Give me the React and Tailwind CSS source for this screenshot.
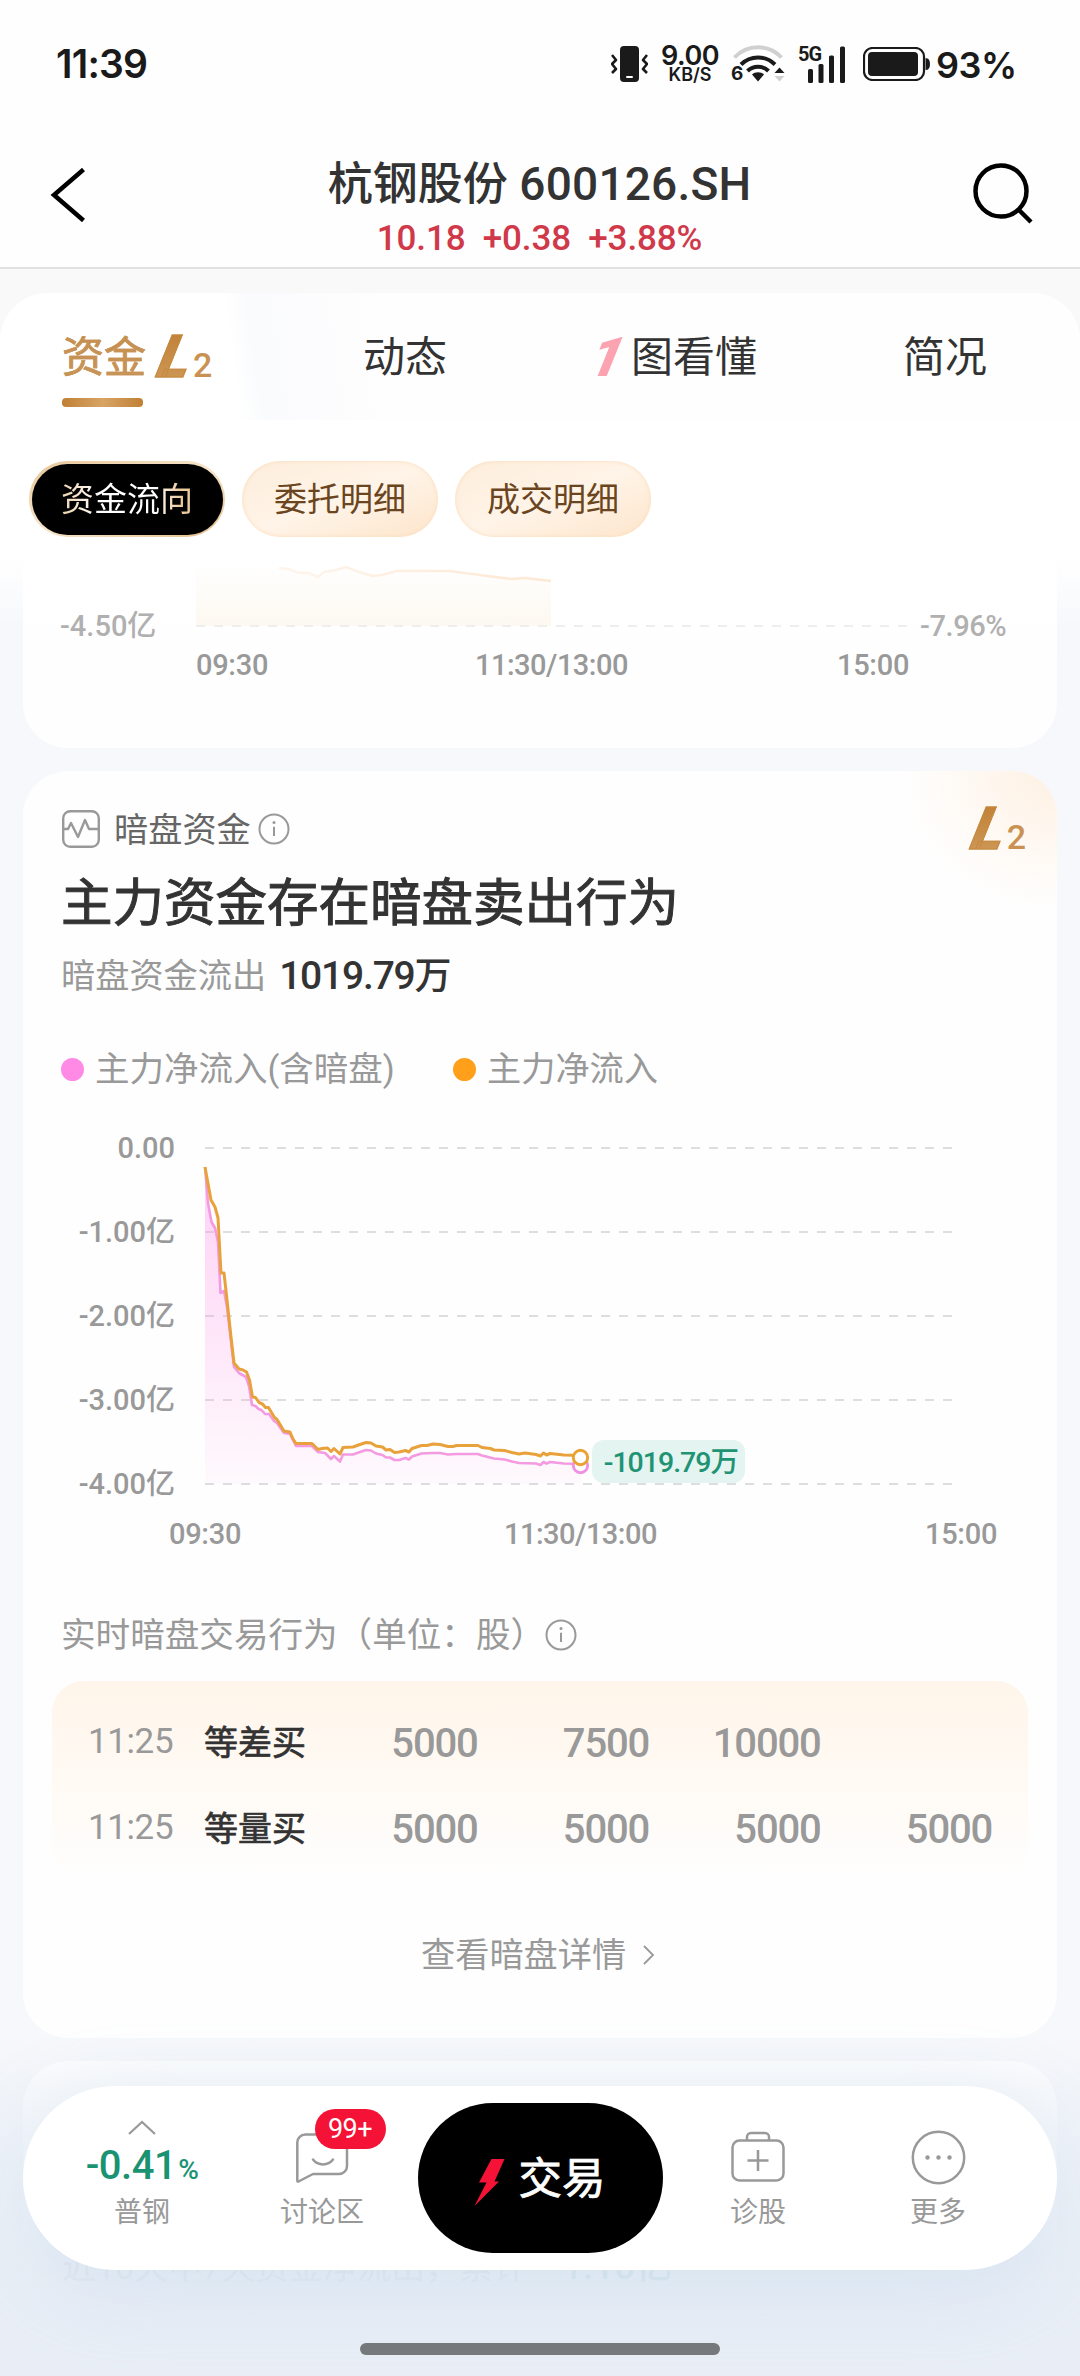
import React from "react";

const ORANGE = [
  [0, 19], [6, 52], [10, 59], [13, 70], [16, 125], [19, 125], [22, 152], [26, 189], [29, 215], [34, 221],
  [38, 222], [41.5, 224], [44.5, 232], [47.5, 249], [50.5, 249.5], [54, 254.5], [57.5, 256], [60.5, 259.5],
  [63.5, 259.5], [69.5, 269.5], [72, 271.5], [79, 283], [85, 284], [88, 291], [91, 295.5], [107, 295.5],
  [113, 301.5], [117, 300.5], [122.5, 300], [126, 303.5], [129, 300.5], [135, 306], [138, 299.5], [148, 299],
  [153.5, 297], [161, 294.5], [166, 295], [171, 298], [177.5, 299], [181, 302], [185, 301.5], [189.5, 304.5],
  [194, 304], [200.5, 302.5], [204, 304], [207, 300.5], [216.5, 297.5], [222, 297.5], [228, 296], [235, 296.5],
  [243, 298.5], [248, 298.5], [251.5, 297.5], [273, 297.5], [277, 299.5], [285.5, 300.5], [289, 302],
  [299.5, 302.5], [307, 304.5], [314, 306], [320, 305], [331, 306.5], [335.5, 308], [338.5, 305], [341.5, 307],
  [345, 305.5], [359, 307], [375.5, 307.5],
];

const PINK = [
  [0, 19], [3, 55], [6.5, 74], [10, 80], [13, 94], [15.5, 145], [19, 143], [22, 159], [26, 193], [29, 219],
  [34, 225], [41, 229], [44, 238], [47, 257], [50.5, 258], [53.5, 261], [56.5, 262], [60, 266], [64, 266],
  [69, 273], [72, 275], [79, 285], [85, 286], [91, 298], [107, 298], [113, 304], [120, 305], [126, 311],
  [129, 308], [135, 313.5], [138, 306.5], [148, 306.5], [153.5, 304.5], [161, 302], [166, 302.5], [171, 305.5],
  [177.5, 307], [181, 309.5], [185, 309.5], [189.5, 312], [194, 312], [200.5, 310], [204, 311.5], [207, 308.5],
  [216.5, 305.5], [228, 305], [235, 305], [243, 306.5], [251.5, 306], [273, 306], [277, 307.5], [289, 310.5],
  [299.5, 311.5], [307, 313.5], [314, 315], [331, 315.5], [335.5, 317], [338.5, 314], [341.5, 315.5],
  [345, 314], [359, 315.5], [375.5, 316],
];

const toPoints = (pts) => pts.map((p) => p.join(",")).join(" ");

function InfoIcon() {
  return (
    <svg className="h-8 w-8" viewBox="0 0 32 32" fill="none" stroke="#999" strokeWidth="2">
      <circle cx="16" cy="16" r="14.5" />
      <path d="M16 13.8V23" />
      <circle cx="16" cy="9.6" r="1.5" fill="#999" stroke="none" />
    </svg>
  );
}

function LevelTwo() {
  return (
    <span className="flex items-baseline">
      <span className="w-[34px] -skew-x-[22deg] bg-gradient-to-b from-[#bf7f33] to-[#cf9a58] bg-clip-text text-[59px] leading-[60px] font-black text-transparent [-webkit-text-stroke:1px_#c48a42]">
        L
      </span>
      <span className="-ml-px text-[34px] leading-[40px] font-medium text-[#c99253]">2</span>
    </span>
  );
}

function StatusBar() {
  return (
    <div className="flex h-32 items-center pr-[66px] pl-14 text-[#1a1a1a] [font-family:Inter,sans-serif]">
      <span className="text-[39px] leading-10 font-semibold tracking-[-0.8px]">11:39</span>
      <div className="ml-auto flex items-center">
        <svg className="h-9 w-[37px]" viewBox="0 0 37 36" fill="none" stroke="#1a1a1a" strokeWidth="2.6">
          <rect x="9" y="0" width="19" height="36" rx="4" fill="#1a1a1a" stroke="none" />
          <rect x="15" y="30" width="7" height="2" rx="1" fill="#fff" stroke="none" />
          <path d="M1 9l4 5-4 4 4 5-4 4M36 9l-4 5 4 4-4 5 4 4" strokeLinejoin="round" />
        </svg>
        <div className="ml-3 flex w-[60px] flex-col items-center">
          <span className="text-[27px] leading-[21px] font-semibold tracking-[-0.5px]">9.00</span>
          <span className="text-[18px] leading-[17px] font-semibold">KB/S</span>
        </div>
        <div className="ml-[11px] flex items-end">
          <span className="w-[11px] text-[19px] leading-[16px] font-bold">6</span>
          <svg className="h-9 w-[43px] overflow-visible" viewBox="11 0 43 36" fill="none">
            <g strokeWidth="4">
              <path d="M3.500 11.500a32 32 0 0 1 47 0" stroke="#d0d0d0" />
              <path d="M10 18.500a24 24 0 0 1 34 0" stroke="#1a1a1a" />
              <path d="M16.500 25a15 15 0 0 1 21 0" stroke="#1a1a1a" />
            </g>
            <path d="M27 35.500l-6-7c3-3 9-3 12 0z" fill="#1a1a1a" />
            <path d="M43.500 27l5-5.500 5 5.500z" fill="#1a1a1a" />
            <path d="M43.500 30l5 5.500 5-5.500z" fill="#d0d0d0" />
          </svg>
        </div>
        <div className="ml-[13px] flex h-[37px] w-12 items-start">
          <span className="w-[9px] text-[20px] leading-4 font-bold tracking-[-1px] [font-family:Roboto,sans-serif]">5G</span>
          <svg className="h-[37px] w-[39px]" viewBox="9 0 39 37" fill="#1a1a1a">
            <rect x="10" y="23" width="5" height="14" rx="1.500" />
            <rect x="20.500" y="18" width="5" height="19" rx="1.500" />
            <rect x="31" y="9.500" width="5" height="27.500" rx="1.500" />
            <rect x="42" y="0.500" width="5" height="36.500" rx="1.500" />
          </svg>
        </div>
        <svg className="ml-[17px] h-[34px] w-[68px]" viewBox="0 0 68 34">
          <rect x="1" y="1" width="60" height="32" rx="8.500" fill="none" stroke="#1a1a1a" strokeWidth="2.200" />
          <rect x="5" y="5" width="50" height="24" rx="4" fill="#1a1a1a" />
          <path d="M62.500 11c3 0 4.500 2 4.500 6s-1.500 6-4.500 6z" fill="#1a1a1a" />
        </svg>
        <span className="ml-[5px] w-[78px] pt-0.5 text-[36px] leading-10 font-semibold tracking-[-0.500px] whitespace-nowrap">93%</span>
      </div>
    </div>
  );
}

function Header() {
  return (
    <div className="flex h-[141px] justify-between border-b-2 border-[#e0e0e0] px-[50px]">
      <svg className="mt-10 h-[54px] w-9" viewBox="0 0 36 54" fill="none" stroke="#000" strokeWidth="4.500">
        <path d="M33.500 1.500L4 27l29.500 25.500" />
      </svg>
      <div className="ml-[27px] flex flex-col items-center pt-[31px]">
        <span className="text-[45px] leading-[50px] font-medium whitespace-pre text-[#333]">
          杭钢股份<span className="text-[46px] tracking-[0.200px]"> 600126.SH</span>
        </span>
        <span className="mt-[9px] text-[35px] leading-10 font-medium tracking-[-0.100px] whitespace-pre text-[#d0394a]">
          10.18  +0.38  +3.88%
        </span>
      </div>
      <svg className="mt-[34px] -mr-1 h-[64px] w-[68px]" viewBox="0 0 68 64" fill="none" stroke="#000" strokeWidth="4.500">
        <circle cx="35" cy="29" r="25.500" />
        <path d="M52 47l13 13" />
      </svg>
    </div>
  );
}

function Tabs() {
  return (
    <div className="flex h-[127px] items-start rounded-t-[48px] bg-[linear-gradient(82deg,#fff_0,#fff_238px,#fafbfd_262px,#fcfcfe_310px,#fefefe_400px,#fefefe_100%)] pt-[35px] pl-[62px] text-[42px] leading-[60px] text-[#333]">
      <div className="w-[301px]">
        <div className="flex h-[60px] items-center">
          <span className="bg-gradient-to-b from-[#c58e4f] to-[#c99759] bg-clip-text text-transparent [-webkit-text-stroke:0.600px_#c79254]">资金</span>
          <div className="-mt-0.5 ml-[14px]">
            <LevelTwo />
          </div>
        </div>
        <div className="mt-[10px] h-[9px] w-[81px] rounded bg-gradient-to-r from-[#c08034] via-[#d8a464] to-[#c08034]" />
      </div>
      <span className="w-[229px]">动态</span>
      <span className="-mt-px w-[39px] -skew-x-[22deg] text-[55px] font-black text-[#fca3b2]">1</span>
      <span className="w-[272px]">图看懂</span>
      <span>简况</span>
    </div>
  );
}

function Pill({ children, active }) {
  if (active) {
    return (
      <div className="rounded-full bg-gradient-to-br from-[#e8c79a] via-[#f6e5cb] to-[#e5bf90] p-[2.5px]">
        <div className="flex h-[71px] w-[191px] items-center justify-center rounded-full bg-black pt-0.5">
          <span className="bg-[linear-gradient(90deg,#ecd2ad_0%,#fff_30%,#fff_70%,#eccb9f_90%)] bg-clip-text text-transparent">
            {children}
          </span>
        </div>
      </div>
    );
  }
  return (
    <div className="flex h-[76px] w-[196px] items-center justify-center rounded-full bg-gradient-to-br from-[#fdeddb] via-[#fff4e8] to-[#fde5cb] pt-0.5 text-[#6b4520] shadow-[inset_0_0_4px_#fbdcbc]">
      {children}
    </div>
  );
}

function FlowChartTail() {
  return (
    <div className="mx-[23px] h-[211px] rounded-b-[45px] bg-gradient-to-b from-white to-[#fefefe] text-[29px] leading-[30px] font-medium text-[#999]">
      <div className="flex pt-[23px] pl-[37px]">
        <span className="mt-[51px] w-[136px] text-[#b0b0b0]">-4.50亿</span>
        <svg className="h-[68px] w-[713px]" viewBox="0 0 713 68" fill="none">
          <defs>
            <linearGradient id="tail" x1="0" y1="0" x2="0" y2="1">
              <stop offset="0" stopColor="#fefefd" />
              <stop offset="1" stopColor="#fdf9f1" />
            </linearGradient>
            <linearGradient id="tailLine" x1="83" y1="0" x2="355" y2="0" gradientUnits="userSpaceOnUse">
              <stop offset="0" stopColor="#fef5ec" />
              <stop offset="1" stopColor="#fde8d4" />
            </linearGradient>
          </defs>
          <path d="M0 8H83L107 13l19 3 6-4 22-4 25 7 24-4h52l31 4 31 3 38 2V66H0z" fill="url(#tail)" />
          <path d="M83 8l10 1 10 4 10 0 9 4 6-5 12-2 10-3 13 5 14 4 9-1 15-4h52l31 4 31 4 14-1 26 3" stroke="url(#tailLine)" strokeWidth="2.500" />
          <path d="M0 66H713" stroke="#eee" strokeWidth="2" strokeDasharray="9 9" />
        </svg>
        <span className="mt-[51px] ml-[11px] tracking-[-0.400px] text-[#b0b0b0]">-7.96%</span>
      </div>
      <div className="mt-[9px] flex pl-[173px] tracking-[-0.300px]">
        <span className="w-[279px]">09:30</span>
        <span className="w-[362px] tracking-[-0.500px]">11:30/13:00</span>
        <span>15:00</span>
      </div>
    </div>
  );
}

function DarkChart() {
  const grid = [0, 84, 168, 252, 336];
  return (
    <div className="text-[29px] leading-[30px] font-medium text-[#999]">
      <div className="mt-[46px] flex">
        <div className="flex h-[366px] w-[114px] flex-col items-end justify-between">
          {["0.00", "-1.00亿", "-2.00亿", "-3.00亿", "-4.00亿"].map((t) => (
            <span key={t} className="whitespace-nowrap">{t}</span>
          ))}
        </div>
        <div className="relative mt-[15px] ml-[30px]">
          <svg className="h-[337px] w-[748px] overflow-visible" viewBox="0 0 748 337" fill="none">
            <defs>
              <linearGradient id="pinkFill" x1="0" y1="0" x2="0" y2="1">
                <stop offset="0" stopColor="#ff8ce6" stopOpacity="0.4" />
                <stop offset="1" stopColor="#ff8ce6" stopOpacity="0.04" />
              </linearGradient>
            </defs>
            {grid.map((y) => (
              <path key={y} d={`M0 ${y}H748`} stroke="#dedede" strokeWidth="2" strokeDasharray="9 9" />
            ))}
            <polygon points={`0,336 ${toPoints(PINK)} 376,336`} fill="url(#pinkFill)" />
            <polyline points={toPoints(PINK)} stroke="#f39ae0" strokeWidth="2.600" strokeLinejoin="round" />
            <polyline points={toPoints(ORANGE)} stroke="#e9a23b" strokeWidth="3" strokeLinejoin="round" />
            <circle cx="375.500" cy="317.500" r="7.200" fill="#fff" stroke="#f092e0" strokeWidth="2.900" />
            <circle cx="375.500" cy="309.500" r="7.200" fill="#fff" stroke="#eaa232" strokeWidth="2.900" />
          </svg>
          <div className="absolute top-[292px] left-[387px] flex h-[43px] w-[153px] items-center justify-end rounded-xl bg-[#e4f4f0] pt-0.5 pr-[7px] text-[28.500px] tracking-[-1px] whitespace-nowrap text-[#1f9374]">
            -1019.79万
          </div>
        </div>
      </div>
      <div className="mt-5 flex pl-[108px] tracking-[-0.300px]">
        <span className="w-[335px]">09:30</span>
        <span className="w-[421px] tracking-[-0.500px]">11:30/13:00</span>
        <span>15:00</span>
      </div>
    </div>
  );
}

const TRADES = [
  { type: "等差买", values: ["5000", "7500", "10000", ""] },
  { type: "等量买", values: ["5000", "5000", "5000", "5000"] },
];

function DarkCard() {
  return (
    <div className="mx-[23px] mt-[23px] h-[1267px] rounded-[45px] bg-[radial-gradient(ellipse_155px_140px_at_100%_0,#fef0e2,#fffaf5_65%,#fefefe)] pt-[39px] pl-[38px] text-[34.200px] text-[#999]">
      <div className="flex h-[38px] items-center">
        <svg className="ml-px h-[38px] w-[38px]" viewBox="0 0 38 38" fill="none" stroke="#999" strokeWidth="2.400">
          <rect x="1.200" y="1.200" width="35.600" height="35.600" rx="7" />
          <path d="M1 19h5l3-6 7 14 7-17 4 9h10" strokeLinejoin="round" />
        </svg>
        <span className="mt-0.5 ml-[14px] leading-[38px] text-[#666]">暗盘资金</span>
        <div className="ml-[7px]">
          <InfoIcon />
        </div>
        <div className="ml-[684px] h-[60px]">
          <LevelTwo />
        </div>
      </div>
      <h1 className="mt-[26px] text-[51.500px] leading-[60px] font-normal text-[#333] [-webkit-text-stroke:1px_#333]">主力资金存在暗盘卖出行为</h1>
      <div className="mt-5 flex h-11 items-center leading-[44px]">
        <span>暗盘资金流出</span>
        <span className="ml-[13px] text-[39px] font-medium tracking-[-1.200px] text-[#333]">
          1019.79<span className="text-[37px]">万</span>
        </span>
      </div>
      <div className="mt-[53px] flex h-9 items-center leading-9">
        <i className="h-[23px] w-[23px] rounded-full bg-[#ff8ae6]" />
        <span className="ml-[11px] w-[300px] text-[34.500px] whitespace-nowrap">主力净流入(含暗盘)</span>
        <i className="ml-[58px] h-[23px] w-[23px] rounded-full bg-[#ff9f1a]" />
        <span className="ml-[11px]">主力净流入</span>
      </div>
      <DarkChart />
      <div className="mt-[68px] flex h-9 items-center leading-9">
        <span className="text-[34.600px]">实时暗盘交易行为（单位：股）</span>
        <InfoIcon />
      </div>
      <div className="mt-7 -ml-[9px] flex h-[199px] w-[976px] flex-col rounded-[32px] bg-gradient-to-b from-[#fff5ea] via-[#fffaf4] to-[#fefefe] pt-[19px] pl-9">
        {TRADES.map((row) => (
          <div key={row.type} className="flex h-[86px] items-center">
            <span className="mb-0.5 w-[116px] text-[35px] tracking-[-0.400px]">11:25</span>
            <span className="w-[102px] text-[34px] whitespace-nowrap text-[#333] [-webkit-text-stroke:0.700px_#333]">{row.type}</span>
            {row.values.map((v, i) => (
              <span key={i} className="w-[171.500px] pt-0.5 text-right text-[40px] font-medium tracking-[-1.200px]">{v}</span>
            ))}
          </div>
        ))}
      </div>
      <div className="mt-[57px] flex h-9 items-center pl-[360px] leading-9">
        <span>查看暗盘详情</span>
        <svg className="ml-[17px] h-5 w-3" viewBox="0 0 12 20" fill="none" stroke="#999" strokeWidth="1.800">
          <path d="M1 1l9 9-9 9" />
        </svg>
      </div>
    </div>
  );
}

function NavItem({ label, children }) {
  return (
    <div className="flex w-[180px] flex-col items-center">
      <div className="flex h-[109px] flex-col items-center">{children}</div>
      <span className="text-[28px] leading-9">{label}</span>
    </div>
  );
}

function BottomNav() {
  return (
    <div className="flex h-[184px] rounded-[92px] bg-white pl-[29px] text-[#999] shadow-[0_20px_80px_rgba(170,203,228,0.3)]">
      <NavItem label="普钢">
        <svg className="mt-[34px] h-[15px] w-7" viewBox="0 0 28 15" fill="none" stroke="#999" strokeWidth="2.200">
          <path d="M1 14L14 2l13 12" />
        </svg>
        <div className="mt-[8px] flex items-baseline font-medium text-[#199372]">
          <span className="text-[40px] leading-[46px] tracking-[-0.500px]">-0.41</span>
          <span className="ml-0.5 text-[28px] leading-[40px] tracking-[-0.500px]">%</span>
        </div>
      </NavItem>
      <NavItem label="讨论区">
        <div className="relative mt-[47px]">
          <svg className="h-[50px] w-[53px]" viewBox="0 0 53 50" fill="none" stroke="#999" strokeWidth="2.500" strokeLinejoin="round">
            <path d="M9 1.500H43a8 8 0 0 1 8 8V33a8 8 0 0 1-8 8H17L2.500 48.500c-.8.300-1.200 0-1.200-1V9.500a8 8 0 0 1 8-8z" />
            <path d="M17 26.500c5 6.500 15 6.500 20 0" strokeLinecap="round" />
          </svg>
          <div className="absolute -top-[24px] left-[19px] flex h-10 w-[71px] items-center justify-center rounded-full bg-[#f41236] text-[27px] leading-10 tracking-[-0.500px] text-white">
            99+
          </div>
        </div>
      </NavItem>
      <div className="mt-[17px] mr-[5px] ml-[6px] flex h-[150px] w-[245px] items-center justify-center rounded-[75px] bg-black">
        <svg className="mt-2 mr-[14px] -ml-0.5 h-12 w-[31px]" viewBox="0 0 31 48" fill="#f41236">
          <path d="M17.500 1H30.500L20.500 23.500H25L.5 48 12.500 24.500H5z" />
        </svg>
        <span className="pt-[3px] text-[43.500px] leading-[60px] text-white [-webkit-text-stroke:0.800px_#fff]">交易</span>
      </div>
      <NavItem label="诊股">
        <svg className="mt-[45px] h-[52px] w-[54px]" viewBox="0 0 54 52" fill="none" stroke="#999" strokeWidth="2.500">
          <rect x="1.500" y="9.500" width="51" height="40" rx="7" />
          <path d="M16 9V6a4 4 0 0 1 4-4h14a4 4 0 0 1 4 4v3M27 19v21M16.500 29.500h21" />
        </svg>
      </NavItem>
      <NavItem label="更多">
        <svg className="mt-[44px] h-[55px] w-[55px]" viewBox="0 0 55 55" fill="none" stroke="#999" strokeWidth="2.500">
          <circle cx="27.500" cy="27.500" r="25.700" />
          <g fill="#999" stroke="none">
            <circle cx="16.500" cy="27.500" r="2.200" />
            <circle cx="27.500" cy="27.500" r="2.200" />
            <circle cx="38.500" cy="27.500" r="2.200" />
          </g>
        </svg>
      </NavItem>
    </div>
  );
}

export default function App() {
  return (
    <div className="relative h-[2376px] w-[1080px] overflow-hidden bg-[#f6f8fb] [font-family:Roboto,'Noto_Sans_CJK_SC',sans-serif]">
      <div className="bg-[#fefefe]">
        <StatusBar />
        <Header />
      </div>
      <div className="bg-[#f9f9f9] pt-6">
        <div className="rounded-t-[48px] bg-white">
          <Tabs />
          <div className="flex h-[117px] gap-[17px] pt-[41px] pl-[29px] text-[33px] leading-10">
            <Pill active>资金流向</Pill>
            <Pill>委托明细</Pill>
            <Pill>成交明细</Pill>
          </div>
        </div>
      </div>
      <div className="bg-[linear-gradient(180deg,#fff_0,#fff_20px,#f6f8fb_90px)]">
        <FlowChartTail />
      </div>
      <DarkCard />
      <div className="mx-[23px] mt-[23px] h-[315px] rounded-t-[45px] bg-[#fefefe] pt-[184px] pl-[39px] text-[34px] leading-[44px] text-[#999]">
        <span className="whitespace-pre">近10天中7天资金净流出，累计</span>
        <span className="ml-[22px] text-[37px] font-medium text-[#199372]">-1.10亿</span>
      </div>
      <div className="absolute inset-x-0 bottom-0 h-[340px] bg-[linear-gradient(180deg,rgba(233,238,246,0)_0,rgba(233,238,246,0.350)_50px,rgba(233,238,246,0.910)_225px,#e9eef6_280px)]" />
      <div className="absolute inset-x-[23px] top-[2086px]">
        <BottomNav />
        <div className="mx-auto mt-[73px] h-3 w-[360px] rounded-full bg-[#75797c]" />
      </div>
    </div>
  );
}
